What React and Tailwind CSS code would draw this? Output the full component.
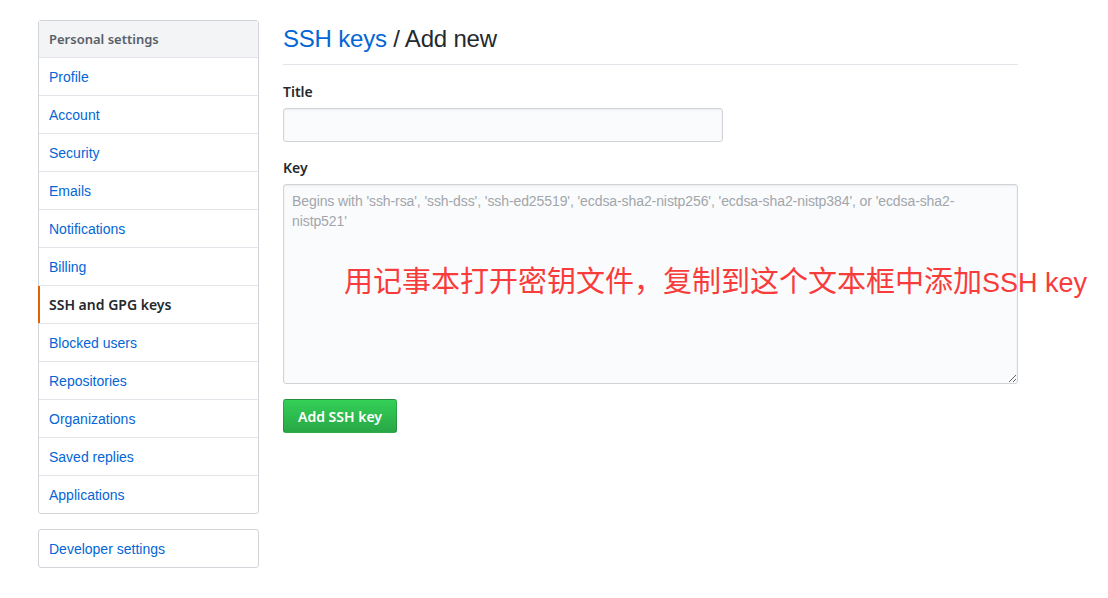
const items = [
  "Profile",
  "Account",
  "Security",
  "Emails",
  "Notifications",
  "Billing",
  "SSH and GPG keys",
  "Blocked users",
  "Repositories",
  "Organizations",
  "Saved replies",
  "Applications",
];

const font = { fontFamily: "'Liberation Sans', Arial, sans-serif" };
const bold = { fontFamily: "'Noto Sans', 'Liberation Sans', sans-serif" };

function Sidebar() {
  return (
    <div className="w-[221px] shrink-0">
      <nav className="rounded-[3px] border border-[#d1d5da] bg-white">
        <div
          className="border-b border-[#e1e4e8] bg-[#f3f4f6] px-[10px] pt-[8px] pb-[7px] text-[13px] leading-[21px] font-semibold text-[#586069]"
          style={bold}
        >
          Personal settings
        </div>
        {items.map((label, i) => {
          const selected = label === "SSH and GPG keys";
          return (
            <div
              key={label}
              style={selected ? bold : undefined}
              className={
                selected
                  ? "relative border-b border-[#e1e4e8] px-[10px] py-[8px] text-[14px] leading-[21px] font-semibold text-[#24292e]"
                  : i === items.length - 1
                  ? "px-[10px] pt-[9px] pb-[7px] text-[14px] leading-[21px] text-[#0366d6]"
                  : "border-b border-[#e1e4e8] px-[10px] pt-[9px] pb-[7px] text-[14px] leading-[21px] text-[#0366d6]"
              }
            >
              {selected && <span className="absolute -left-px top-0 bottom-0 w-[2px] bg-[#e36209]" />}
              {label}
            </div>
          );
        })}
      </nav>
      <nav className="mt-[15px] rounded-[3px] border border-[#d1d5da] bg-white">
        <div className="px-[10px] pt-[9px] pb-[7px] text-[14px] leading-[21px] text-[#0366d6]">Developer settings</div>
      </nav>
    </div>
  );
}

export default function App() {
  return (
    <div className="min-h-[598px] bg-white text-[#24292e]" style={font}>
      <div className="relative ml-[38px] flex gap-[24px] pt-[20px]">
        <Sidebar />
        <div className="w-[735px]">
          <div className="border-b border-[#e1e4e8] pt-px pb-[7px] text-[24px] leading-[36px] font-normal tracking-[-0.2px]">
            <span className="text-[#0366d6]">SSH keys</span> / Add new
          </div>
          <div className="mt-[16px]">
            <label className="block text-[14px] leading-[21px] font-semibold" style={bold}>
              Title
            </label>
            <input className="mt-[6px] block h-[34px] w-[440px] rounded-[3px] border border-[#d1d5da] bg-[#fafbfc] px-[8px] text-[14px] shadow-[inset_0_1px_2px_rgba(27,31,35,0.075)] outline-none" />
          </div>
          <div className="mt-[15px]">
            <label className="block text-[14px] leading-[21px] font-semibold" style={bold}>
              Key
            </label>
            <textarea
              className="mt-[6px] block h-[200px] w-[735px] resize-y rounded-[3px] border border-[#d1d5da] bg-[#fafbfc] px-[8px] pt-[6px] pb-[8px] text-[14px] leading-[20px] tracking-[-0.09px] shadow-[inset_0_1px_2px_rgba(27,31,35,0.075)] outline-none placeholder:text-[#a2a6ab]"
              placeholder="Begins with 'ssh-rsa', 'ssh-dss', 'ssh-ed25519', 'ecdsa-sha2-nistp256', 'ecdsa-sha2-nistp384', or 'ecdsa-sha2-nistp521'"
            />
          </div>
          <button
            className="mt-[15px] h-[34px] rounded-[3px] border border-[rgba(27,31,35,0.2)] bg-gradient-to-b from-[#34d058] to-[#28a745] px-[14px] text-[14px] font-semibold text-white"
            style={bold}
          >
            Add SSH key
          </button>
        </div>
        <div className="absolute left-[306px] top-[261px] whitespace-nowrap text-[#f83b3b] leading-[36px]">
          <span className="text-[29px]" style={{ fontFamily: "'Noto Sans CJK SC', sans-serif" }}>
            用记事本打开密钥文件，复制到这个文本框中添加
          </span>
          <span className="text-[27px]" style={{ fontFamily: "'Liberation Sans', sans-serif" }}>
            SSH key
          </span>
        </div>
      </div>
    </div>
  );
}
